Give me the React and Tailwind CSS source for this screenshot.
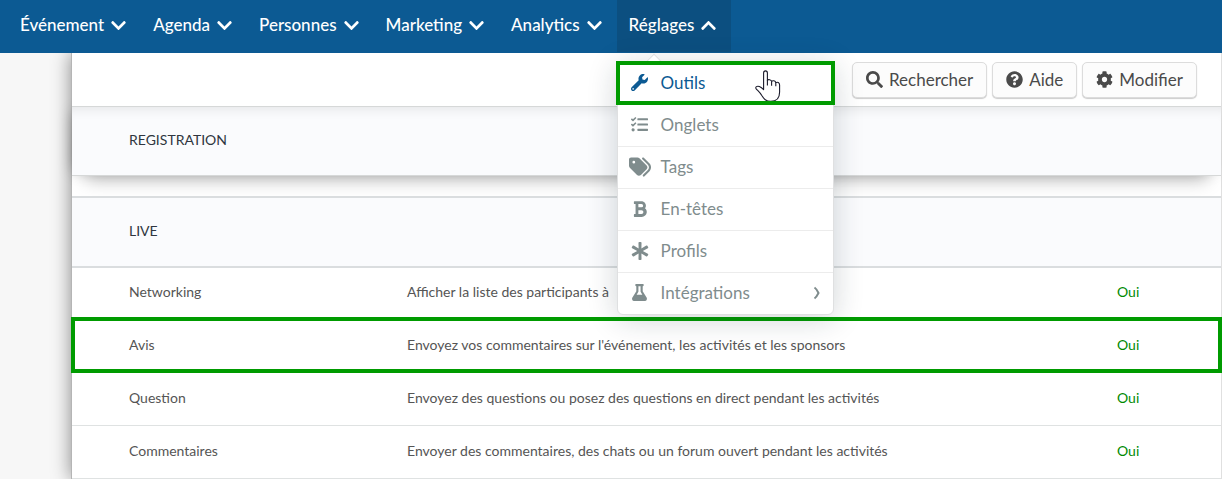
import React from 'react';
import {
  FaAsterisk,
  FaBold,
  FaChevronDown,
  FaChevronUp,
  FaCog,
  FaFlask,
  FaQuestionCircle,
  FaSearch,
  FaTasks,
  FaWrench,
} from 'react-icons/fa';
import { FaTags } from 'react-icons/fa6';

const navItems = ['Événement', 'Agenda', 'Personnes', 'Marketing', 'Analytics', 'Réglages'];

const settingsItems = [
  { label: 'Outils', icon: FaWrench, size: 'size-[17px]', selected: true },
  { label: 'Onglets', icon: FaTasks, size: 'size-[17px]' },
  { label: 'Tags', icon: FaTags, size: 'size-[22px]' },
  { label: 'En-têtes', icon: FaBold, size: 'size-[18px]' },
  { label: 'Profils', icon: FaAsterisk, size: 'size-[18px]' },
  { label: 'Intégrations', icon: FaFlask, size: 'size-[17px]', submenu: true },
];

const actions = [
  { label: 'Rechercher', icon: FaSearch },
  { label: 'Aide', icon: FaQuestionCircle },
  { label: 'Modifier', icon: FaCog },
];

const features = [
  { name: 'Networking', description: 'Afficher la liste des participants à', enabled: 'Oui' },
  {
    name: 'Avis',
    description: "Envoyez vos commentaires sur l'événement, les activités et les sponsors",
    enabled: 'Oui',
    highlighted: true,
  },
  {
    name: 'Question',
    description: 'Envoyez des questions ou posez des questions en direct pendant les activités',
    enabled: 'Oui',
  },
  {
    name: 'Commentaires',
    description: 'Envoyer des commentaires, des chats ou un forum ouvert pendant les activités',
    enabled: 'Oui',
  },
];

const HandCursor = () => (
  <svg viewBox="0 0 26 32" className="pointer-events-none absolute top-[7px] right-[52px] h-8 w-[26px]" aria-hidden="true">
    <path
      d="M8.6 19.6V3C8.6 .2 12.4 .2 12.4 3V10.2C13.2 9.2 16.2 9.4 16.6 11.4C17.6 10.2 20.4 10.6 20.8 12.6C22.4 11.6 24.6 12.6 24.6 15V22C24.6 28 21.5 31.4 15.8 31.4C10.8 31.4 9 29 6.8 25.5C5 22.3 3 20.8 1.2 18.8C-.2 17 2.2 15.6 4.4 16.6C6.2 17.4 7.4 18.4 8.6 19.6Z"
      fill="#fff"
      stroke="#1b1b2b"
      strokeWidth="1.1"
      strokeLinejoin="round"
    />
    <path d="M12.4 10V15.6M16.6 11.4V15.8M20.8 12.6V16.2" fill="none" stroke="#1b1b2b" strokeWidth="1.1" />
  </svg>
);

const SettingsMenu = () => (
  <div className="absolute top-[62px] left-0 z-20 w-[217px] rounded-md border border-[#dfe0e1] bg-white shadow-[0_4px_30px_rgba(20,40,50,0.2)]">
    <span className="absolute -top-[7px] left-[30px] h-3 w-3 rotate-45 border-t border-l border-[#dfe0e1] bg-white" />
    <ul className="relative">
      {settingsItems.map(({ label, icon: Icon, size, selected, submenu }) => (
        <li key={label} className="relative border-b border-[#ececec] last:border-b-0">
          <a
            href="#"
            className={`flex h-[41px] items-center pr-3 pb-[2px] pl-[10px] text-[17px] ${
              selected ? 'text-[#0c5a93]' : 'text-[#7f8c8d]'
            }`}
          >
            <span className="mr-[9px] flex w-6 justify-center">
              <Icon className={size} />
            </span>
            {label}
            {submenu && (
              <svg viewBox="0 0 8 14" className="ml-auto h-[14px] w-2" aria-hidden="true">
                <path d="M1.5 1.5C3 2.5 4.5 5 5.5 7C4.5 9 3 11.5 1.5 12.5" fill="none" stroke="currentColor" strokeWidth="2" />
              </svg>
            )}
          </a>
          {selected && <HandCursor />}
          {selected && <span className="absolute -inset-x-[2px] -top-[2px] -bottom-px border-4 border-[#009b00]" />}
        </li>
      ))}
    </ul>
  </div>
);

const NavBar = () => (
  <nav className="relative z-20 flex h-[53px] bg-[#0c5a93] pl-2 text-white">
    {navItems.map((label) => {
      const open = label === 'Réglages';
      const Chevron = open ? FaChevronUp : FaChevronDown;
      return (
        <div key={label} className="relative">
          <button
            type="button"
            className={`flex h-[52px] items-center gap-[6px] pr-[14px] pb-[2px] pl-3 text-[17px] font-medium ${
              open ? 'bg-[#0c4f80]' : ''
            }`}
          >
            {label}
            <Chevron className="size-[17px]" />
          </button>
          {open && <SettingsMenu />}
        </div>
      );
    })}
  </nav>
);

const SectionTitle = ({ children }) => (
  <h2 className="flex h-[68px] items-center pb-[2px] pl-[57px] text-sm text-[#2f3640]">{children}</h2>
);

const App = () => (
  <div className="min-h-screen overflow-hidden bg-[#f7f7f7] font-['Lato',sans-serif] text-[#555]">
    <NavBar />
    <main className="ml-[71px] border-x border-l-[#b5b5b5] border-r-[#e0e0e0] bg-white shadow-[0_0_18px_rgba(0,0,0,0.45)]">
      <div className="relative z-10 flex h-[54px] items-center justify-end gap-[5px] border-b border-[#d6d8d8] bg-white pr-6">
        {actions.map(({ label, icon: Icon }) => (
          <button
            key={label}
            type="button"
            className="flex h-9 items-center gap-[6px] rounded-[5px] border border-[#dcdcdc] bg-[#fcfcfc] px-[13px] text-[17px] text-[#4a4a4a] shadow-[0_1px_1px_rgba(0,0,0,0.2)]"
          >
            <Icon className="size-[17px]" />
            {label}
          </button>
        ))}
      </div>
      <div className="mb-5 border-b border-[#d6d8d8] bg-[#fafbfd] shadow-[0_18px_18px_-14px_rgba(0,0,0,0.25),-4px_0_14px_-6px_rgba(0,0,0,0.35),inset_0_12px_14px_-12px_rgba(0,0,0,0.12)]">
        <SectionTitle>REGISTRATION</SectionTitle>
      </div>
      <div className="border-y-2 border-[#dadddf] bg-[#fafbfd]">
        <SectionTitle>LIVE</SectionTitle>
      </div>
      <table className="w-full table-fixed text-left text-sm">
        <colgroup>
          <col className="w-[335px]" />
          <col />
          <col className="w-[104px]" />
        </colgroup>
        <tbody>
          {features.map(({ name, description, enabled, highlighted }) => (
            <tr key={name} className="relative h-[53px] border-b border-[#dfe2e2] first:h-[51px]">
              <th scope="row" className="pb-[2px] pl-[57px] font-normal">
                {name}
                {highlighted && (
                  <span className="absolute -inset-x-px -top-[2px] -bottom-[2px] border-4 border-[#009b00]" />
                )}
              </th>
              <td className="pb-[2px]">{description}</td>
              <td className="pb-[2px] text-[#008a00]">{enabled}</td>
            </tr>
          ))}
        </tbody>
      </table>
    </main>
  </div>
);

export default App;
